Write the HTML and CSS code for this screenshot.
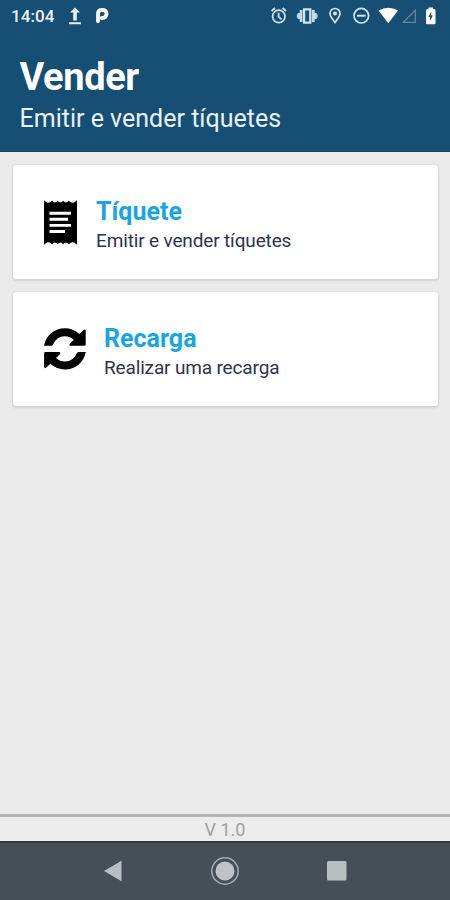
FILE: index.html
```html
<!DOCTYPE html>
<html lang="pt">
<head>
<meta charset="utf-8">
<title>Vender</title>
<link rel="stylesheet" href="styles.css">
</head>
<body>
<div class="screen">
  <header class="header">
    <div class="status">
      <span class="clock">14:04</span>
      <svg class="notices" width="44" height="20" viewBox="66 6 44 20" fill="#e6f0f6">
        <path d="M75 7.500l5 5h-3.200v8h-3.600v-8H70zM69 22.300h12v2H69z"/>
        <path fill="none" stroke="#fff" stroke-width="3.800" stroke-linecap="round" stroke-linejoin="round" d="M98 21.300V13.800q0-4 4-4 4.500 0 4.500 4 0 4.200-4.800 4.200"/>
      </svg>
      <svg class="indicators" width="176" height="20" viewBox="268 6 176 20" fill="none" stroke="#d5e5ef" stroke-width="1.700">
        <circle cx="278.800" cy="16.400" r="6.200"/>
        <path d="M278.600 12.800v4l3 2.500M271.600 11l3.400-3M286 11l-3.400-3"/>
        <path stroke-width="2.200" d="M304.100 9.300h6.200v13.400h-6.200z"/>
        <path fill="#c6d8e4" stroke="none" d="M302.500 10v12h-2.800v-3h-2v-1.500H296.800v-3h.9V13h2v-3zM311.900 10v12h2.800v-3h2v-1.500h.9v-3h-.9V13h-2v-3z"/>
        <path d="M335 22.500c-3-4-5-6.400-5-9a5 5 0 0 1 10 0c0 2.600-2 5-5 9z"/>
        <circle cx="335" cy="13.500" r="1.200" fill="#d5e5ef"/>
        <circle cx="361.300" cy="15.700" r="7.300"/>
        <path stroke-width="2" d="M357 15.700h8.600"/>
        <path fill="#fff" stroke="none" d="M378.500 10.600q9.800-5.600 19.600 0L388.300 23.300z"/>
        <path stroke="#6388a1" stroke-width="1.300" d="M403.300 22.300h12V10.300z"/>
        <path fill="#fff" stroke="none" d="M428.500 7.600h4.500v1.600h1.500q1 0 1 1v13q0 1-1 1h-7.500q-1 0-1-1v-13q0-1 1-1h1.500z"/>
        <path fill="#174f74" stroke="none" d="M431.300 11.500v4h1.500l-2.700 5.500v-4h-1.600z"/>
      </svg>
    </div>
    <h1 class="title">Vender</h1>
    <p class="subtitle">Emitir e vender tíquetes</p>
  </header>
  <main class="list">
    <section class="card">
      <svg width="33" height="45" viewBox="0 0 33 45">
        <path d="M0 .3 2.800 2.600Q5.500 3.500 8.200.8q2.800 3.600 5.500 0 2.800 3.600 5.500 0 2.800 3.600 5.500 0 2.700 2.700 5.500 1.800L33 .3V44.700L30.200 42.400Q27.400 41.500 24.700 44.200q-2.700-3.600-5.500 0-2.700-3.600-5.500 0-2.700-3.600-5.500 0Q5.500 41.500 2.800 42.400L0 44.700z"/>
        <path fill="none" stroke="#fff" stroke-width="2.900" d="M5.500 13.200h21.500M5.500 19.300h18.500M5.500 25.400h21.500M5.500 31.500h15.500"/>
      </svg>
      <div class="copy">
        <h2 class="name">Tíquete</h2>
        <p class="detail">Emitir e vender tíquetes</p>
      </div>
    </section>
    <section class="card">
      <svg width="42" height="42" viewBox="0 0 42 42">
        <path id="arrow" d="M0 17.800C2 7 10.500.3 20.800.3q8.500 0 14.600 5.700L39.800 2q1.700-1.100 1.900.7V16.600q0 1.200-1.200 1.200H26.600q-2-.2-.7-2.200L29.800 11.700Q26 8.200 20.800 8.200 12.500 8.200 8.500 17.200q-.4.600-1.200.6z"/>
        <use href="#arrow" transform="rotate(180 20.900 20.900)"/>
      </svg>
      <div class="copy copy-recharge">
        <h2 class="name">Recarga</h2>
        <p class="detail">Realizar uma recarga</p>
      </div>
    </section>
  </main>
  <footer class="version">V 1.0</footer>
  <nav class="navbar">
    <svg width="20" height="22" viewBox="0 0 20 22"><path fill="#b8bfc3" d="M1 11 18.500.7v20.600z"/></svg>
    <svg width="30" height="30" viewBox="0 0 30 30"><circle cx="15" cy="15" r="13.200" fill="none" stroke="#a5acb1" stroke-width="1.500"/><circle cx="15" cy="15" r="9.500" fill="#bdc3c7"/></svg>
    <svg width="20" height="20" viewBox="0 0 20 20"><rect width="19.500" height="19.500" rx="1.500" fill="#b8bfc1"/></svg>
  </nav>
</div>
</body>
</html>
```
FILE: styles.css
```css
* { box-sizing: border-box; }
body, h1, h2, p { margin: 0; }
body { font-family: Roboto, "Liberation Sans", sans-serif; background: #eaeaea; }
svg { display: block; flex: none; }
.screen { height: 900px; display: flex; flex-direction: column; overflow: hidden; }
.header { height: 152px; flex: none; background: #174f74; color: #fff; border-bottom: 1px solid #10456b; }
.status { height: 32px; display: flex; align-items: center; padding: 0 6px 0 11px; }
.clock { width: 55px; font-size: 17px; font-weight: 500; letter-spacing: .1px; line-height: 20px; color: #edf5fa; }
.indicators { margin-left: auto; }
.title { margin: 22px 0 0 19.5px; font-size: 38px; line-height: 46px; font-weight: 700; letter-spacing: -.4px; }
.subtitle { margin: 4px 0 0 19.5px; font-size: 25px; line-height: 30px; color: #e8f2f9; white-space: nowrap; }
.list { flex: 1; padding: 13px 12px 0 13px; display: flex; flex-direction: column; gap: 13px; }
.card { height: 114px; padding: 0 31px; display: flex; align-items: center; background: #fff; border-radius: 3px; box-shadow: 0 1px 2px 1px #d3d3d3; }
.copy { margin-left: 19px; padding-top: 7px; white-space: nowrap; }
.copy-recharge { margin-left: 18px; }
.name { color: #18a5e5; font-size: 25px; line-height: 30px; font-weight: 700; }
.detail { color: #30344c; font-size: 19px; line-height: 27px; letter-spacing: -.15px; }
.version { height: 27px; flex: none; border-top: 3px solid #b4b4b4; background: #ececec; color: #a0a0a0; font-size: 18px; line-height: 26px; text-align: center; }
.navbar { height: 59px; flex: none; display: flex; align-items: center; justify-content: center; gap: 87px; padding-bottom: 2px; background: #464e57; border-top: 2px solid #343c42; }
```
